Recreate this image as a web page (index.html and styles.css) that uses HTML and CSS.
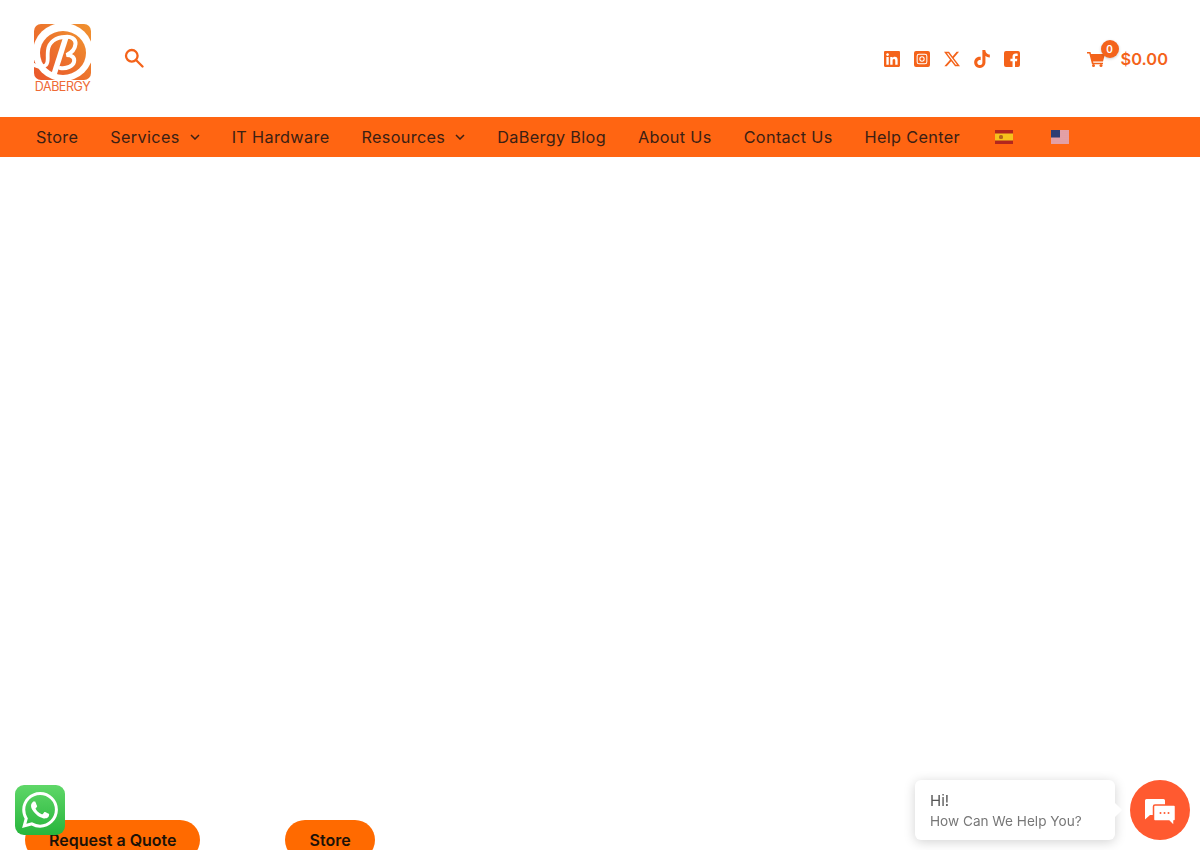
FILE: index.html
```html
<!DOCTYPE html>
<html lang="en">
<head>
  <meta charset="UTF-8" />
  <title>DaBergy</title>
  <link rel="stylesheet" href="styles.css">
</head>
<body>
  <svg class="defs" width="0" height="0">
    <defs>
      <linearGradient id="logoFill" x1="0" y1="1" x2="1" y2="0">
        <stop offset="0" stop-color="#e9562b" />
        <stop offset="1" stop-color="#f0922f" />
      </linearGradient>
    </defs>
  </svg>

  <!-- Header -->
  <header class="top">
    <div class="brand">
      <div class="logo">
        <svg class="logo-mark" viewBox="0 0 57 56">
          <rect width="57" height="56" rx="7" fill="url(#logoFill)" />
          <ellipse cx="29" cy="28" rx="30" ry="29" fill="#fff" />
          <ellipse cx="29" cy="29" rx="23" ry="22" fill="url(#logoFill)" />
          <g fill="none" stroke="#fff" stroke-linecap="round">
            <path d="M31 13C22 13 15 18 14 26c-1 7 1 12-2 15-3 2-8 2-12 0" stroke-width="3.800" />
            <path d="M32 13 19.500 52" stroke-width="5.500" stroke-linecap="butt" />
            <path d="M31 13c6-1 11 2 10.500 7-.5 5-4 9-9 11 6 0 8.500 3 7.500 7-1 4-7 7-14 6" stroke-width="4" />
          </g>
        </svg>
        <span class="logo-text">DABERGY</span>
      </div>
      <svg class="search" viewBox="0 0 20 20" fill="none" stroke="#f4631a" stroke-width="2.300">
        <circle cx="7.800" cy="7.800" r="5.800" />
        <path d="m12 12 6.500 6.500" stroke-linecap="round" />
      </svg>
    </div>

    <div class="top-right">
      <div class="socials">
        <svg class="social" viewBox="0 0 24 24"><path d="M20.447 20.452h-3.554v-5.569c0-1.328-.027-3.037-1.852-3.037-1.853 0-2.136 1.445-2.136 2.939v5.667H9.351V9h3.414v1.561h.046c.477-.9 1.637-1.85 3.37-1.85 3.601 0 4.267 2.37 4.267 5.455v6.286zM5.337 7.433c-1.144 0-2.063-.926-2.063-2.065 0-1.138.92-2.063 2.063-2.063 1.14 0 2.064.925 2.064 2.063 0 1.139-.925 2.065-2.064 2.065zm1.782 13.019H3.555V9h3.564v11.452zM22.225 0H1.771C.792 0 0 .774 0 1.729v20.542C0 23.227.792 24 1.771 24h20.451C23.2 24 24 23.227 24 22.271V1.729C24 .774 23.2 0 22.222 0h.003z" /></svg>
        <svg class="social" viewBox="0 0 24 24"><path fill-rule="evenodd" d="M3 0h18a3 3 0 0 1 3 3v18a3 3 0 0 1-3 3H3a3 3 0 0 1-3-3V3a3 3 0 0 1 3-3zm4.500 4A3.500 3.500 0 0 0 4 7.500v9A3.500 3.500 0 0 0 7.500 20h9a3.500 3.500 0 0 0 3.500-3.500v-9A3.500 3.500 0 0 0 16.500 4h-9zm0 1.500h9a2 2 0 0 1 2 2v9a2 2 0 0 1-2 2h-9a2 2 0 0 1-2-2v-9a2 2 0 0 1 2-2zM12 8a4 4 0 1 0 0 8 4 4 0 0 0 0-8zm0 1.500a2.500 2.500 0 1 1 0 5 2.500 2.500 0 0 1 0-5z" /></svg>
        <svg class="social" viewBox="0 0 24 24"><path d="M18.901 1.153h3.68l-8.04 9.19L24 22.846h-7.406l-5.8-7.584-6.638 7.584H.474l8.6-9.83L0 1.154h7.594l5.243 6.932ZM17.61 20.644h2.039L6.486 3.24H4.298Z" /></svg>
        <svg class="social tiktok" viewBox="0 0 24 24"><path d="M12.525.02c1.31-.02 2.61-.01 3.91-.02.08 1.53.63 3.09 1.75 4.17 1.12 1.11 2.7 1.62 4.24 1.79v4.03c-1.44-.05-2.89-.35-4.2-.97-.57-.26-1.1-.59-1.62-.93-.01 2.92.01 5.84-.02 8.75-.08 1.4-.54 2.79-1.35 3.94-1.31 1.92-3.58 3.17-5.91 3.21-1.43.08-2.86-.31-4.08-1.03-2.02-1.19-3.44-3.37-3.65-5.71-.02-.5-.03-1-.01-1.49.18-1.9 1.12-3.72 2.58-4.96 1.66-1.44 3.98-2.13 6.15-1.72.02 1.48-.04 2.96-.04 4.44-.99-.32-2.15-.23-3.02.37-.63.41-1.11 1.04-1.36 1.75-.21.51-.15 1.07-.14 1.61.24 1.64 1.82 3.02 3.5 2.87 1.12-.01 2.19-.66 2.77-1.61.19-.33.4-.67.41-1.06.1-1.79.06-3.57.07-5.36.01-4.03-.01-8.05.02-12.07z" /></svg>
        <svg class="social" viewBox="0 0 24 24"><path d="M3 0h18a3 3 0 0 1 3 3v18a3 3 0 0 1-3 3h-4.500v-8.800h3l.5-3.700h-3.500V9.200c0-1.100.4-1.800 1.900-1.800H20.500V4.100c-.4-.1-1.600-.2-2.900-.2-2.900 0-4.800 1.700-4.800 4.900v2.700H9.600v3.700h3.200V24H3a3 3 0 0 1-3-3V3a3 3 0 0 1 3-3z" /></svg>
      </div>
      <div class="cart">
        <span class="cart-icon">
          <svg viewBox="0 0 18 16" width="18" height="16"><path d="M0 1h3.500l.5 2h14l-2 7.500H6l.4 1.300H16v1.400H5L2.300 2.400H0z" fill="#f4631a" /><circle cx="6.500" cy="14.500" r="1.500" fill="#f4631a" /><circle cx="14" cy="14.500" r="1.500" fill="#f4631a" /></svg>
          <span class="badge">0</span>
        </span>
        <span class="total">$0.00</span>
      </div>
    </div>
  </header>

  <!-- Main menu -->
  <nav class="menu">
    <a href="#">Store</a>
    <a href="#">Services <svg class="caret" viewBox="0 0 10 6"><path d="m1 1 4 4 4-4" /></svg></a>
    <a href="#">IT Hardware</a>
    <a href="#">Resources <svg class="caret" viewBox="0 0 10 6"><path d="m1 1 4 4 4-4" /></svg></a>
    <a href="#">DaBergy Blog</a>
    <a href="#">About Us</a>
    <a href="#">Contact Us</a>
    <a href="#">Help Center</a>
    <a href="#" class="flag-link">
      <svg class="flag" viewBox="0 0 18 14"><rect width="18" height="14" fill="#b3261e" /><rect y="3.500" width="18" height="7" fill="#f6c21c" /><rect x="4" y="5" width="4" height="4" rx="1.500" fill="#b5651d" /></svg>
    </a>
    <a href="#" class="flag-link">
      <svg class="flag" viewBox="0 0 18 14"><rect width="18" height="14" fill="#fff" /><path d="M0 1h18M0 3h18M0 5h18M0 7h18M0 9h18M0 11h18M0 13h18" stroke="#c8404c" stroke-width="1" /><rect width="9" height="7.500" fill="#2e3d73" /></svg>
    </a>
  </nav>

  <main class="hero">
    <div class="hero-buttons">
      <a href="#" class="btn">Request a Quote</a>
      <a href="#" class="btn">Store</a>
    </div>
  </main>

  <!-- Floating widgets -->
  <a href="#" class="whatsapp">
    <svg viewBox="0 0 24 24" width="36" height="36"><path fill="#fff" d="M17.472 14.382c-.297-.149-1.758-.867-2.03-.967-.273-.099-.471-.148-.67.15-.197.297-.767.966-.94 1.164-.173.199-.347.223-.644.075-.297-.15-1.255-.463-2.39-1.475-.883-.788-1.48-1.761-1.653-2.059-.173-.297-.018-.458.13-.606.134-.133.298-.347.446-.52.149-.174.198-.298.298-.497.099-.198.05-.371-.025-.52-.075-.149-.669-1.612-.916-2.207-.242-.579-.487-.5-.669-.51-.173-.008-.371-.01-.57-.01-.198 0-.52.074-.792.372-.272.297-1.04 1.016-1.04 2.479 0 1.462 1.065 2.875 1.213 3.074.149.198 2.096 3.2 5.077 4.487.709.306 1.262.489 1.694.625.712.227 1.36.195 1.871.118.571-.085 1.758-.719 2.006-1.413.248-.694.248-1.289.173-1.413-.074-.124-.272-.198-.57-.347m-5.421 7.403h-.004a9.87 9.87 0 01-5.031-1.378l-.361-.214-3.741.982.998-3.648-.235-.374a9.86 9.86 0 01-1.51-5.26c.001-5.45 4.436-9.884 9.888-9.884 2.64 0 5.122 1.03 6.988 2.898a9.825 9.825 0 012.893 6.994c-.003 5.45-4.437 9.884-9.885 9.884m8.413-18.297A11.815 11.815 0 0012.05 0C5.495 0 .16 5.335.157 11.892c0 2.096.547 4.142 1.588 5.945L.057 24l6.305-1.654a11.882 11.882 0 005.683 1.448h.005c6.554 0 11.89-5.335 11.893-11.893a11.821 11.821 0 00-3.48-8.413z" /></svg>
  </a>

  <div class="chat">
    <div class="chat-bubble">
      <p class="chat-hi">Hi!</p>
      <p class="chat-help">How Can We Help You?</p>
    </div>
    <div class="chat-button">
      <svg class="chat-icon" viewBox="0 0 32 28" width="32" height="28">
        <path d="M2.500 1h17a1.500 1.500 0 0 1 1.500 1.500v13a1.500 1.500 0 0 1-1.500 1.500H6l-5 4.500V2.500A1.500 1.500 0 0 1 2.500 1z" fill="#fff" />
        <path d="M11 7h19a1.500 1.500 0 0 1 1.500 1.500v13a1.500 1.500 0 0 1-1.500 1.500v5l-5-5H11a1.500 1.500 0 0 1-1.500-1.500v-13A1.500 1.500 0 0 1 11 7z" fill="#fff" stroke="#ff5a30" stroke-width="1.500" />
        <circle cx="16.500" cy="15" r="1" fill="#ff5a30" /><circle cx="20.500" cy="15" r="1" fill="#ff5a30" /><circle cx="24.500" cy="15" r="1" fill="#ff5a30" />
      </svg>
    </div>
  </div>
</body>
</html>
```

FILE: styles.css
```css
html, body {
  margin: 0;
  height: 850px;
  overflow: hidden;
}

body {
  font-family: 'Inter', 'Open Sans', sans-serif;
  background: white;
  color: #333;
}

.defs {
  position: absolute;
}

.top {
  height: 117px;
  display: flex;
  align-items: center;
  justify-content: space-between;
  padding: 0 32px 0 34px;
}

.brand {
  display: flex;
  align-items: center;
  gap: 33px;
}

.logo {
  width: 57px;
  display: flex;
  flex-direction: column;
  align-items: center;
  gap: 1px;
}

.logo-mark {
  width: 57px;
  height: 56px;
  display: block;
}

.logo-text {
  font-size: 12.5px;
  line-height: 12px;
  letter-spacing: -0.45px;
  color: #ee6a35;
}

.search {
  width: 20px;
  height: 20px;
  margin-top: -2px;
}

.top-right {
  display: flex;
  align-items: center;
  gap: 67px;
}

.socials {
  display: flex;
  align-items: center;
  gap: 14px;
}

.social {
  width: 16px;
  height: 16px;
  fill: #f4631a;
}

.tiktok {
  width: 18px;
  height: 18px;
  margin: 0 -1px;
}

.cart {
  display: flex;
  align-items: center;
  gap: 16px;
}

.cart-icon {
  position: relative;
  display: block;
  width: 18px;
  height: 16px;
}

.badge {
  position: absolute;
  top: -11px;
  right: -14px;
  width: 18px;
  height: 18px;
  border-radius: 50%;
  background: #f4631a;
  color: white;
  font-size: 10px;
  font-weight: 600;
  line-height: 18px;
  text-align: center;
  box-shadow: 0 1px 3px rgba(0,0,0,0.2);
}

.total {
  font-size: 16.4px;
  font-weight: 600;
  color: #f4631a;
}

.menu {
  height: 40px;
  display: flex;
  align-items: center;
  padding-left: 20px;
  background: #ff6512;
}

.menu a {
  display: flex;
  align-items: center;
  gap: 10px;
  padding: 0 16px;
  font-size: 16.25px;
  letter-spacing: 0.33px;
  color: #3b2014;
  text-decoration: none;
  white-space: nowrap;
}

.caret {
  width: 10px;
  height: 6px;
  fill: none;
  stroke: #3b2014;
  stroke-width: 1.5;
}

.menu .flag-link {
  padding: 0 19px;
}

.flag {
  width: 18px;
  height: 14px;
  display: block;
}

.hero {
  padding: 663px 0 0 25px;
}

.hero-buttons {
  display: flex;
  gap: 85px;
}

.btn {
  height: 40px;
  padding: 0 24px;
  border-radius: 25px;
  background: #ff6a00;
  color: #1c1208;
  font-size: 16px;
  font-weight: 600;
  line-height: 40px;
  text-decoration: none;
}

.whatsapp {
  position: fixed;
  left: 15px;
  top: 785px;
  width: 50px;
  height: 50px;
  border-radius: 9px;
  background: linear-gradient(#5fd768, #27b53c);
  display: flex;
  align-items: center;
  justify-content: center;
}

.chat {
  position: fixed;
  right: 10px;
  top: 780px;
  display: flex;
  align-items: center;
  gap: 15px;
}

.chat-bubble {
  position: relative;
  width: 200px;
  height: 60px;
  box-sizing: border-box;
  padding: 12px 15px;
  background: white;
  border-radius: 6px;
  box-shadow: 0 2px 12px rgba(0,0,0,0.18);
}

.chat-bubble::after {
  content: "";
  position: absolute;
  right: -5px;
  top: 25px;
  width: 10px;
  height: 10px;
  background: white;
  transform: rotate(45deg);
}

.chat-hi, .chat-help {
  margin: 0;
  color: #555;
}

.chat-hi {
  font-size: 15px;
  line-height: 18px;
}

.chat-help {
  margin-top: 2px;
  font-size: 13.6px;
  line-height: 18px;
  color: #777;
}

.chat-button {
  width: 60px;
  height: 60px;
  border-radius: 50%;
  background: #ff5a30;
  display: flex;
  align-items: center;
  justify-content: center;
}

.chat-icon {
  margin-top: 4px;
}
```
